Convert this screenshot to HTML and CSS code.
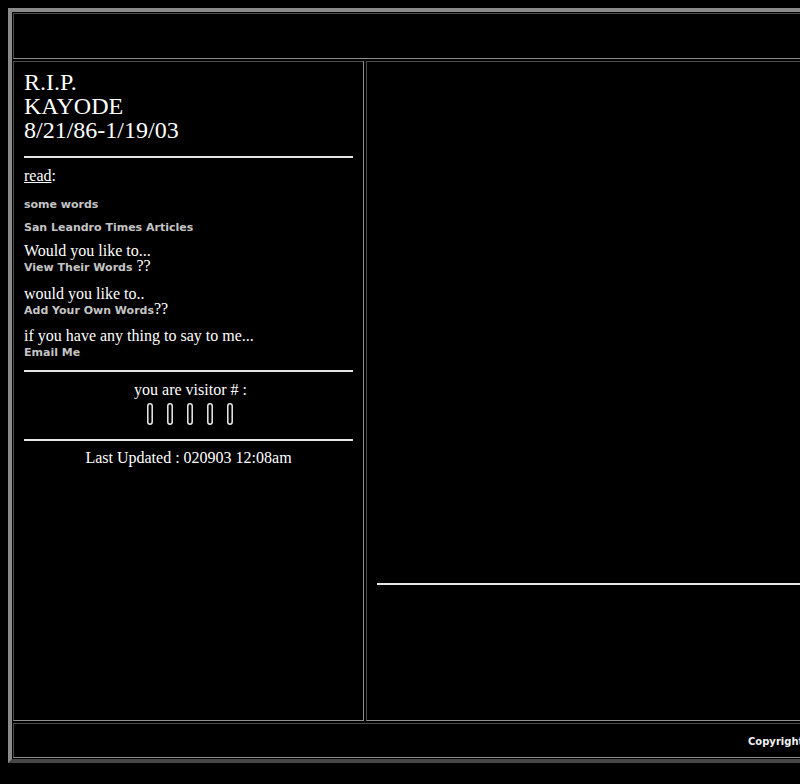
FILE: index.html
```html
<!DOCTYPE html>
<html>
<head>
<meta charset="utf-8">
<title>R.I.P. KAYODE</title>
<link rel="stylesheet" href="styles.css">
</head>
<body>
<div class="page">
<div class="frame">
  <div class="cell header"></div>
  <div class="cell side">
    <div class="title">R.I.P.<br>KAYODE<br>8/21/86-1/19/03</div>
    <div class="rule rule-1"></div>
    <div class="read"><a class="read-link" href="#">read</a>:</div>
    <div class="nav nav-1"><a href="#">some words</a></div>
    <div class="nav nav-2"><a href="#">San Leandro Times Articles</a></div>
    <div class="q q-1">Would you like to...<br><a href="#">View Their Words</a> ??</div>
    <div class="q">would you like to..<br><a href="#">Add Your Own Words</a>??</div>
    <div class="q">if you have any thing to say to me...<br><a href="#">Email Me</a></div>
    <div class="rule rule-2"></div>
    <div class="visitor">you are visitor # :</div>
    <div class="counter">
      <span class="digit"><svg width="6" height="22" viewBox="0 0 6 22"><rect x="0.8" y="0.8" width="4.4" height="20.4" rx="2.2" fill="none" stroke="#ececec" stroke-width="1.5"/></svg></span>
      <span class="digit"><svg width="6" height="22" viewBox="0 0 6 22"><rect x="0.8" y="0.8" width="4.4" height="20.4" rx="2.2" fill="none" stroke="#ececec" stroke-width="1.5"/></svg></span>
      <span class="digit"><svg width="6" height="22" viewBox="0 0 6 22"><rect x="0.8" y="0.8" width="4.4" height="20.4" rx="2.2" fill="none" stroke="#ececec" stroke-width="1.5"/></svg></span>
      <span class="digit"><svg width="6" height="22" viewBox="0 0 6 22"><rect x="0.8" y="0.8" width="4.4" height="20.4" rx="2.2" fill="none" stroke="#ececec" stroke-width="1.5"/></svg></span>
      <span class="digit"><svg width="6" height="22" viewBox="0 0 6 22"><rect x="0.8" y="0.8" width="4.4" height="20.4" rx="2.2" fill="none" stroke="#ececec" stroke-width="1.5"/></svg></span>
    </div>
    <div class="rule rule-3"></div>
    <div class="updated">Last Updated : 020903 12:08am</div>
  </div>
  <div class="cell main">
    <div class="main-space"></div>
    <div class="rule"></div>
  </div>
  <div class="cell footer">Copyright &copy; 2003 Kayode</div>
</div>
</div>
</body>
</html>
```

FILE: styles.css
```css
html, body {
  overflow: hidden;
  background: #000;
}
body {
  margin: 0;
  padding: 8px;
  width: 1120px;
  color: #fff;
  font-family: "Liberation Serif", "Times New Roman", serif;
  font-size: 16px;
}
a {
  color: inherit;
}
.page {
  width: 1100px;
}
.frame {
  width: 1090px;
  min-width: 1090px;
  display: grid;
  grid-template-columns: 351px 727px;
  grid-template-rows: 46px 660px 35px;
  gap: 2px;
  padding: 1px;
  border: 4px solid;
  border-color: #8a8a8a #474747 #474747 #8a8a8a;
}
.cell {
  border: 1px solid;
  border-color: #4b4b4b #8d8d8d #8d8d8d #4b4b4b;
  padding: 10px;
  min-width: 0;
  overflow: hidden;
}
.header, .footer {
  grid-column: 1 / 3;
}
.title {
  font-size: 24px;
  line-height: 24px;
  margin-top: -2px;
}
.rule {
  height: 2px;
  background: #e6e6e6;
}
.rule-1 { margin-top: 14px; }
.rule-2 { margin-top: 11.5px; }
.rule-3 { margin-top: 14px; }
.read {
  margin-top: 9px;
  line-height: 18px;
}
.read-link {
  text-decoration: underline;
}
.nav {
  font-family: "DejaVu Sans", Verdana, sans-serif;
  font-weight: bold;
  font-size: 11px;
  line-height: 13px;
}
.nav a, .q a {
  color: #c4c4c4;
  text-decoration: none;
  font-family: "DejaVu Sans", Verdana, sans-serif;
  font-weight: bold;
  font-size: 11px;
}
.nav-1 { margin-top: 13px; }
.nav-2 { margin-top: 10px; }
.q {
  line-height: 15px;
  margin-top: 12.5px;
}
.q a {
  line-height: 11px;
}
.q-1 { margin-top: 9px; }
.visitor {
  margin-top: 9px;
  line-height: 18px;
  text-align: center;
  padding-left: 4px;
}
.counter {
  margin-top: 4px;
  display: flex;
  justify-content: center;
  padding-left: 3px;
  height: 22px;
}
.digit {
  width: 20px;
  display: flex;
  justify-content: center;
}
.digit svg {
  display: block;
}
.updated {
  margin-top: 8px;
  line-height: 18px;
  text-align: center;
}
.main-space {
  height: 511px;
}
.footer {
  padding: 11px 10px 9px 734px;
  font-family: "DejaVu Sans", Verdana, sans-serif;
  font-weight: bold;
  font-size: 10px;
  line-height: 13px;
  white-space: nowrap;
  color: #f2f2f2;
}
```
